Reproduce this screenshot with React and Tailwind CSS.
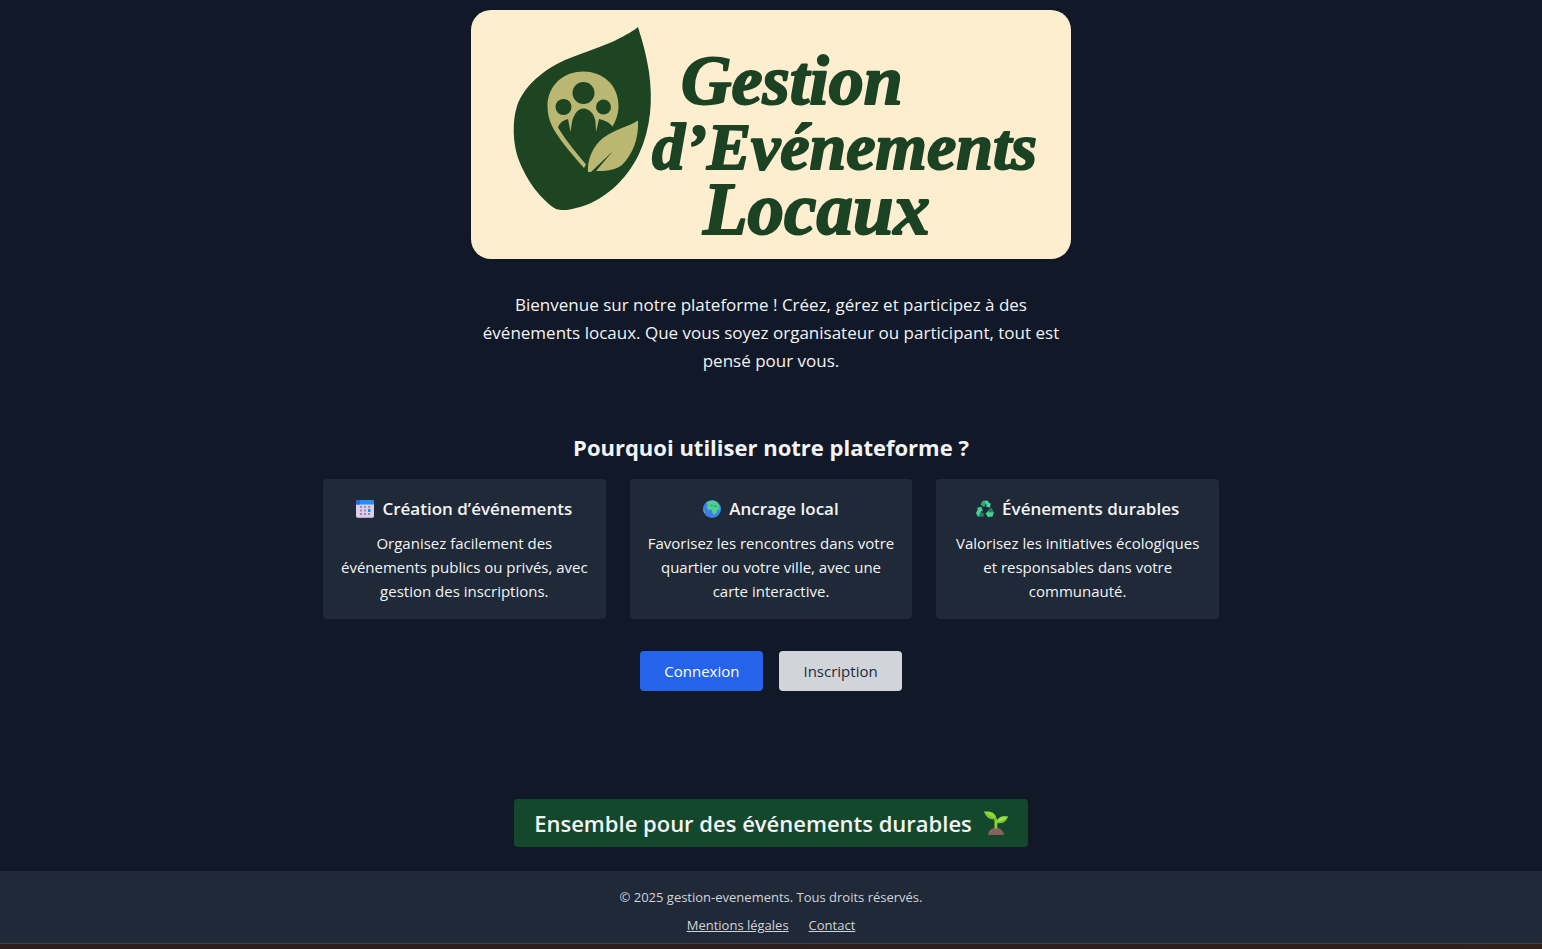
function Logo() {
  return (
    <svg viewBox="0 0 600 249" className="block w-full rounded-[20px] bg-[#feeed0]" role="img" aria-label="Gestion d'Evénements Locaux">
      <path d="M167 17C170 27 175 42 178 62C182 90 180 118 168 144C156 169 133 192 105 198C99 200 91 201 85 199C70 190 55 170 47 148C42 133 41 112 46 96C53 76 72 60 94 50C108 44 124 39 141 32C151 27 161 22 167 17Z" fill="#1e4522" />
      <path d="M141.500 116.500C146 109 147.500 102 147.500 96C147.500 75 132 61.500 112 61.500C92 61.500 76.500 76 76.500 96C76.500 107 80 115 85 123C92 134 101 144 113 158L115 154.500C106 144 96 132 87 117.500C89 112 93 110 97 109L99.500 122L101 112C103 104 107 98.500 112.500 98.500C119 98.500 124 105 124.500 112L125 122L128 109C133 110 138 112 141.500 116.500Z" fill="#b9b772" />
      <circle cx="112.500" cy="83" r="11" fill="#1e4522" />
      <circle cx="92.500" cy="97" r="8" fill="#1e4522" />
      <circle cx="132.500" cy="97" r="7.500" fill="#1e4522" />
      <path d="M117 162C116 150 122 136 132 128C144 119 157 117 167 110.500C168 128 162 144 151 155C143 161 133 161 125 161L142 141L120 162Z" fill="#b9b772" />
      <g fill="#1b4223" stroke="#1b4223" strokeWidth="2" strokeLinejoin="round" className="font-['Liberation_Serif',serif] font-bold italic">
        <text x="210" y="94" fontSize="70">Gestion</text>
        <text x="181" y="159" fontSize="66">d’Evénements</text>
        <text x="232" y="224" fontSize="73">Locaux</text>
      </g>
    </svg>
  );
}

function CalendarIcon() {
  return (
    <svg viewBox="0 0 18 18" className="size-[18px] shrink-0" aria-hidden="true">
      <rect width="18" height="18" rx="2.500" fill="#dccdea" />
      <path d="M0 4.500V2.500A2.500 2.500 0 0 1 2.500 0h13A2.500 2.500 0 0 1 18 2.500v2z" fill="#258df5" />
      <path d="M0 4.500V2.500A2.500 2.500 0 0 1 2.500 0H4v4.500z" fill="#2867df" />
      <g fill="#998ba9">
        <path d="M4 6h2v2H4zM8 6h2v2H8zM12 6h2v2h-2zM4 9.500h2v2H4zM8 9.500h2v2H8zM4 13h2v2H4zM8 13h2v2H8zM12 13h2v2h-2z" />
      </g>
      <path d="M12 9h2.500v3H12z" fill="#238af1" />
      <path d="M2 17.500h14" stroke="#bba7cb" />
    </svg>
  );
}

function GlobeIcon() {
  return (
    <svg viewBox="0 0 18 18" className="size-[18px] shrink-0" aria-hidden="true">
      <defs>
        <linearGradient id="sea" x1="1" y1="0" x2="0" y2="1">
          <stop offset="0" stopColor="#369be9" />
          <stop offset="1" stopColor="#446fe8" />
        </linearGradient>
      </defs>
      <circle cx="9" cy="9" r="9" fill="url(#sea)" />
      <path d="M3.500 3C6 .5 11 .2 13.500 2L16 5l.5 4-2 1-1.500 3-2 2-1.500-2-.5-3-3.500-.5L3.500 7.500 5 5z" fill="#4fd08c" />
      <path d="M8 4l2 1.500 3-.5 1.500 2.500-2.500-.5-2-1-2.500.5z" fill="#2da98a" />
      <path d="M0 8.500l1.500 1.500.5 3-.8.300z" fill="#45c4a0" />
    </svg>
  );
}

function RecycleIcon() {
  return (
    <svg viewBox="0 0 18 18" className="size-[18px] shrink-0" aria-hidden="true">
      <path d="M4.500 4.500L6.800.8h4.700L9.500 4.500 8 7.200z" fill="#2bac76" />
      <path d="M8.500.8h3.200l1.800 2.700 1.300-.5-.8 4.800-4.700-1.500 1.500-.8z" fill="#4bd99a" />
      <path d="M12.500 9.500L15.500 7.800 18 12.300l-1.500 4-2-1z" fill="#21805f" />
      <path d="M9.500 13.800L12.800 10.300v2h5l-1.500 4.400h-3.500v1.300z" fill="#43d392" />
      <path d="M2 16.700L.5 13.500 3 12.300l4.700.5v4z" fill="#21805f" />
      <path d="M0 13l2-4-1.500-1L5.300 6.700 7 11.200l-1.600-.5L3 15.500l-1 1.200z" fill="#46d293" />
    </svg>
  );
}

function SeedlingIcon() {
  return (
    <svg viewBox="0 0 24 24" className="size-6 shrink-0" aria-hidden="true">
      <path d="M4 24C4.500 19.500 8 16.800 12 16.800s7.500 2.700 8 7.200z" fill="#85605d" />
      <path d="M6 21.500l1.500-2M10 20l2-1M15 21l1.500 1" stroke="#a7716a" />
      <path d="M10.500 17.500V7.500h2.800v10z" fill="#8ccf38" />
      <path d="M0 .5C6 0 12 1 12.500 8.500 6 8.500 2.500 7 0 .5z" fill="#91d738" />
      <path d="M24 5.500C18 4.500 13.500 6 12.500 12 18.500 13 22.500 10.500 24 5.500z" fill="#9ae046" />
      <path d="M2 2.500C5 6 8 7.500 12 8M23 7C21 10 17 11.500 13.500 11.500" fill="none" stroke="#68ad29" />
    </svg>
  );
}

const features = [
  {
    icon: CalendarIcon,
    title: "Création d’événements",
    text: "Organisez facilement des événements publics ou privés, avec gestion des inscriptions.",
  },
  {
    icon: GlobeIcon,
    title: "Ancrage local",
    text: "Favorisez les rencontres dans votre quartier ou votre ville, avec une carte interactive.",
  },
  {
    icon: RecycleIcon,
    title: "Événements durables",
    text: "Valorisez les initiatives écologiques et responsables dans votre communauté.",
  },
];

export default function App() {
  return (
    <div className="flex min-h-screen flex-col bg-[#111827] font-['Open_Sans','Segoe_UI',sans-serif] text-[#f3f4f6]">
      <main className="flex grow flex-col items-center px-4 pt-2.5 pb-6 text-center">
        <h1 className="w-full max-w-[600px]">
          <Logo />
        </h1>
        <p className="mt-8 max-w-[600px] text-[17px] leading-7">
          Bienvenue sur notre plateforme ! Créez, gérez et participez à des événements locaux. Que vous soyez
          organisateur ou participant, tout est pensé pour vous.
        </p>
        <section className="mt-14 w-full max-w-4xl">
          <h2 className="mb-4 text-[22px] leading-8 font-bold">Pourquoi utiliser notre plateforme ?</h2>
          <div className="grid gap-6 md:grid-cols-3">
            {features.map(({ icon: Icon, title, text }) => (
              <article key={title} className="rounded bg-[#1f2937] p-4">
                <h3 className="mb-2 flex items-center justify-center gap-2 text-[17px] leading-7 font-semibold">
                  <Icon />
                  {title}
                </h3>
                <p className="text-[15px] leading-6">{text}</p>
              </article>
            ))}
          </div>
        </section>
        <div className="mt-8 flex gap-4 text-[15px] leading-6">
          <button type="button" className="rounded bg-[#2563eb] px-6 py-2 text-white">Connexion</button>
          <button type="button" className="rounded bg-[#d1d5db] px-6 py-2 text-[#1f2937]">Inscription</button>
        </div>
        <p className="mt-auto flex items-center gap-3 rounded bg-[#14482d] px-5 py-2 text-[22px] leading-8 font-semibold">
          Ensemble pour des événements durables
          <SeedlingIcon />
        </p>
      </main>
      <footer className="bg-[#1f2937] text-center text-[13px] leading-5 text-[#d1d5db]">
        <div className="px-4 pt-4 pb-2">
          <p>© 2025 gestion-evenements. Tous droits réservés.</p>
          <nav className="mt-2 flex justify-center gap-5">
            <a href="#mentions" className="underline">Mentions légales</a>
            <a href="#contact" className="underline">Contact</a>
          </nav>
        </div>
        <div className="h-1.5 border-t border-[#4a4140] bg-linear-to-r from-[#2b1d1e] via-[#2b1e1e] to-[#30201a]" />
      </footer>
    </div>
  );
}
